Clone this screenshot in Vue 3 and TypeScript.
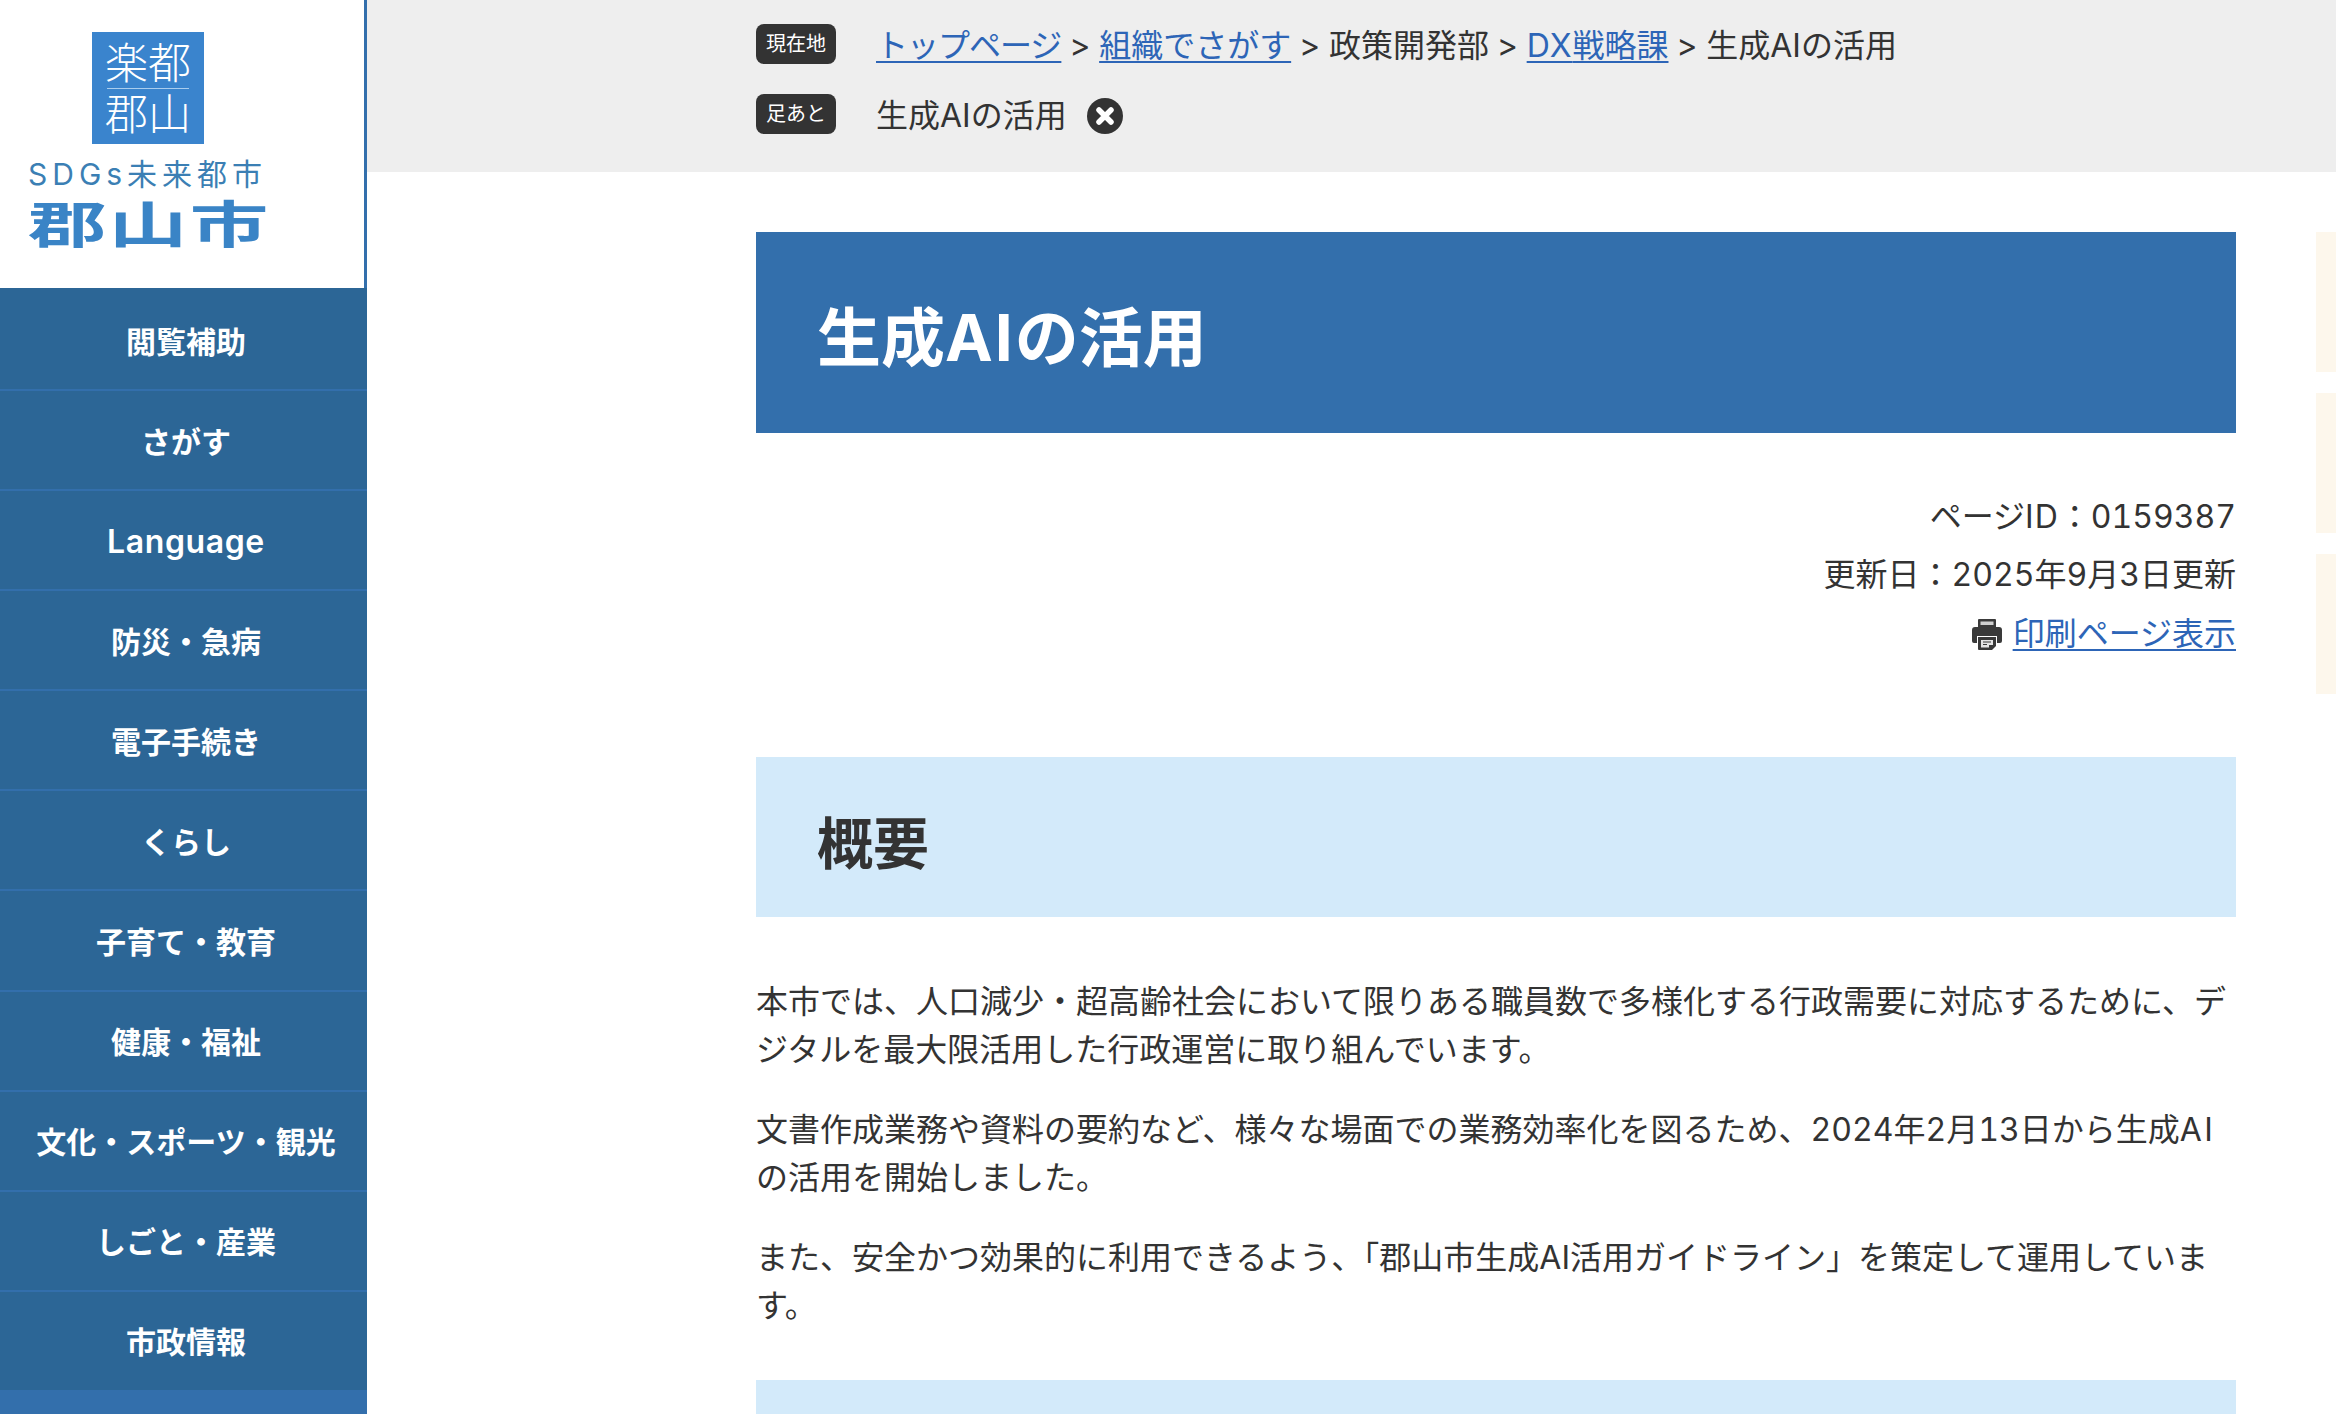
<script setup lang="ts">
const navItems: string[] = ['閲覧補助', 'さがす', 'Language', '防災・急病', '電子手続き', 'くらし', '子育て・教育', '健康・福祉', '文化・スポーツ・観光', 'しごと・産業', '市政情報']
const railItems: number[] = [1, 2, 3]
</script>

<template>
  <div class="page" lang="ja">
    <aside class="sidebar">
      <div class="logo">
        <div class="mark">
          <span class="mark-row">楽都</span>
          <span class="mark-rule"></span>
          <span class="mark-row">郡山</span>
        </div>
        <div class="sdgs">SDGs未来都市</div>
        <div class="city">郡山市</div>
      </div>
      <nav class="nav">
        <a v-for="item in navItems" :key="item" class="nav-item" :class="{ latin: item === 'Language' }">{{ item }}</a>
      </nav>
    </aside>

    <main class="main">
      <div class="crumbs">
        <div class="crumb-row">
          <span class="badge">現在地</span>
          <div class="crumb-text">
            <a class="link tight">トップページ</a><span class="sep">&gt;</span><a class="link">組織でさがす</a><span class="sep">&gt;</span><span>政策開発部</span><span class="sep">&gt;</span><a class="link"><span class="wide-id">DX</span>戦略課</a><span class="sep">&gt;</span><span>生成AIの活用</span>
          </div>
        </div>
        <div class="crumb-row">
          <span class="badge">足あと</span>
          <div class="crumb-text">
            <span>生成AIの活用</span>
            <svg class="close" viewBox="0 0 36 36" aria-hidden="true">
              <circle cx="18" cy="18" r="18" fill="#333" />
              <path d="M12 12 24 24M24 12 12 24" stroke="#fff" stroke-width="5.5" stroke-linecap="round" />
            </svg>
          </div>
        </div>
      </div>

      <div class="body">
        <article class="content">
          <h1 class="title">生成<span class="wide">AI</span>の活用</h1>
          <div class="meta">
            <p>ページ<span class="wide-id">ID</span>：0159387</p>
            <p>更新日：2025年9月3日更新</p>
            <p class="print">
              <svg class="printer" viewBox="0 0 30 32" aria-hidden="true">
                <path d="M7 1h16a1 1 0 0 1 1 1v7H6V2a1 1 0 0 1 1-1Z" fill="#3a3a3a" />
                <rect x="8.500" y="3.500" width="13" height="3.500" fill="#cfcfcf" />
                <path d="M3 9h24a3 3 0 0 1 3 3v11a2 2 0 0 1-2 2h-3v-7H5v7H2a2 2 0 0 1-2-2V12a3 3 0 0 1 3-3Z" fill="#3a3a3a" />
                <path d="M6 19h18v9l-4 4H7a1 1 0 0 1-1-1Z" fill="#3a3a3a" />
                <path d="M9 22h12v5h-4v2.500H9Z" fill="#e4e4e4" />
                <path d="M11 24h8M11 26.500h4" stroke="#3a3a3a" stroke-width="1.200" />
              </svg>
              <a class="link">印刷ページ表示</a>
            </p>
          </div>

          <h2 class="heading">概要</h2>
          <p class="para first">本市では、人口減少・超高齢社会において限りある職員数で多様化する行政需要に対応するために、デジタルを最大限活用した行政運営に取り組んでいます。</p>
          <p class="para">文書作成業務や資料の要約など、様々な場面での業務効率化を図るため、2024年2月13日から生成<span class="wide-ai">AI</span><br />の活用を開始しました。</p>
          <p class="para">また、安全かつ効果的に利用できるよう、「郡山市生成AI活用ガイドライン」を策定して運用しています。</p>
          <div class="heading next"></div>
        </article>
        <div class="rail">
          <span v-for="n in railItems" :key="n" class="rail-item"></span>
        </div>
      </div>
    </main>
  </div>
</template>

<style>
html, body { margin: 0; background: #fff; }
</style>

<style scoped>
.page {
  display: flex;
  height: 1414px;
  overflow: hidden;
  background: #fff;
  color: #333;
  font-family: Inter, "Noto Sans CJK JP", sans-serif;
  font-size: 32px;
  line-height: 48px;
  font-weight: 400;
  font-variant-numeric: tabular-nums;
}
.sidebar {
  width: 367px;
  flex: none;
  display: flex;
  flex-direction: column;
  background: #336fac;
}
.logo {
  height: 288px;
  flex: none;
  box-sizing: border-box;
  background: #fff;
  margin-right: 3px;
  padding-top: 32px;
  display: flex;
  flex-direction: column;
  align-items: flex-start;
}
.mark {
  width: 112px;
  height: 112px;
  margin-left: 92px;
  background: #3a84cd;
  color: #fff;
  display: flex;
  flex-direction: column;
  align-items: center;
  justify-content: center;
  font-size: 43px;
  font-weight: 300;
  line-height: 48px;
}
.mark-row { display: block; height: 48px; }
.mark-rule { display: block; width: 82px; height: 1px; background: #a9cdee; margin: 1px 0; }
.sdgs {
  margin: 12px 0 0 28px;
  color: #3b7fb4;
  font-size: 30px;
  line-height: 36px;
  font-weight: 400;
  letter-spacing: 5px;
  white-space: nowrap;
}
.city {
  margin: 5px 0 0 28px;
  color: #3a84c6;
  font-size: 50px;
  line-height: 56px;
  font-weight: 700;
  letter-spacing: 1.500px;
  white-space: nowrap;
  transform: scaleX(1.57);
  transform-origin: left center;
}
.nav { flex: 1; display: flex; flex-direction: column; }
.nav-item {
  height: 100.100px;
  flex: none;
  box-sizing: border-box;
  display: flex;
  align-items: center;
  justify-content: center;
  padding: 3px 0 0 5px;
  background: #2c6696;
  border-bottom: 2px solid #336fac;
  color: #fff;
  font-size: 30px;
  font-weight: 700;
  white-space: nowrap;
}
.nav-item.latin { font-size: 32px; font-weight: 600; letter-spacing: 0.600px; }
.nav-item:first-child { height: 103px; padding-top: 7px; }
.nav-item:last-child { height: 98.500px; padding-top: 1px; border-bottom: 0; }
.main { flex: 1; min-width: 0; display: flex; flex-direction: column; }
.crumbs {
  height: 172px;
  flex: none;
  box-sizing: border-box;
  background: #eee;
  padding: 24px 0 0 389px;
  display: flex;
  flex-direction: column;
  gap: 30px;
}
.crumb-row { display: flex; align-items: center; height: 40px; }
.badge {
  width: 80px;
  height: 40px;
  flex: none;
  border-radius: 8px;
  background: #333;
  color: #fff;
  font-size: 20px;
  line-height: 40px;
  font-weight: 400;
  text-align: center;
}
.crumb-text {
  margin-left: 40px;
  padding-top: 4px;
  display: flex;
  align-items: center;
  white-space: nowrap;
}
.sep { margin: 0 8.500px; }
.link {
  color: #2d65b7;
  text-decoration: underline;
  text-underline-offset: 4px;
  text-decoration-thickness: 2px;
}
.tight { letter-spacing: -1px; }
.close { width: 36px; height: 36px; margin-left: 20px; }
.body { flex: 1; min-height: 0; display: flex; padding: 60px 0 0 389px; }
.content { width: 1480px; flex: none; }
.title {
  margin: 0;
  height: 201px;
  box-sizing: border-box;
  padding: 10px 0 0 61px;
  background: #336fac;
  color: #fff;
  font-size: 64px;
  line-height: 144px;
  font-weight: 700;
  display: flex;
  align-items: center;
}
.wide { letter-spacing: 2px; }
.wide-id { letter-spacing: 1px; }
.wide-ai { letter-spacing: 2.500px; }
.meta { margin-top: 54.500px; text-align: right; }
.meta p { margin: 0; height: 58.500px; line-height: 58.500px; }
.print { display: flex; justify-content: flex-end; align-items: center; gap: 11px; }
.printer { width: 30px; height: 32px; }
.heading {
  margin: 0;
  height: 160px;
  box-sizing: border-box;
  padding: 15px 0 0 61px;
  background: #d3eafa;
  font-size: 56px;
  font-weight: 700;
  display: flex;
  align-items: center;
}
.meta + .heading { margin-top: 93.500px; }
.para { margin: 32px 0 0; }
.para.first { margin-top: 61.500px; }
.next { margin-top: 49.500px; }
.rail {
  margin-left: 80px;
  display: flex;
  flex-direction: column;
  gap: 21px;
  flex: none;
}
.rail-item { display: block; width: 20px; height: 140px; background: #fdf7ec; }
</style>
